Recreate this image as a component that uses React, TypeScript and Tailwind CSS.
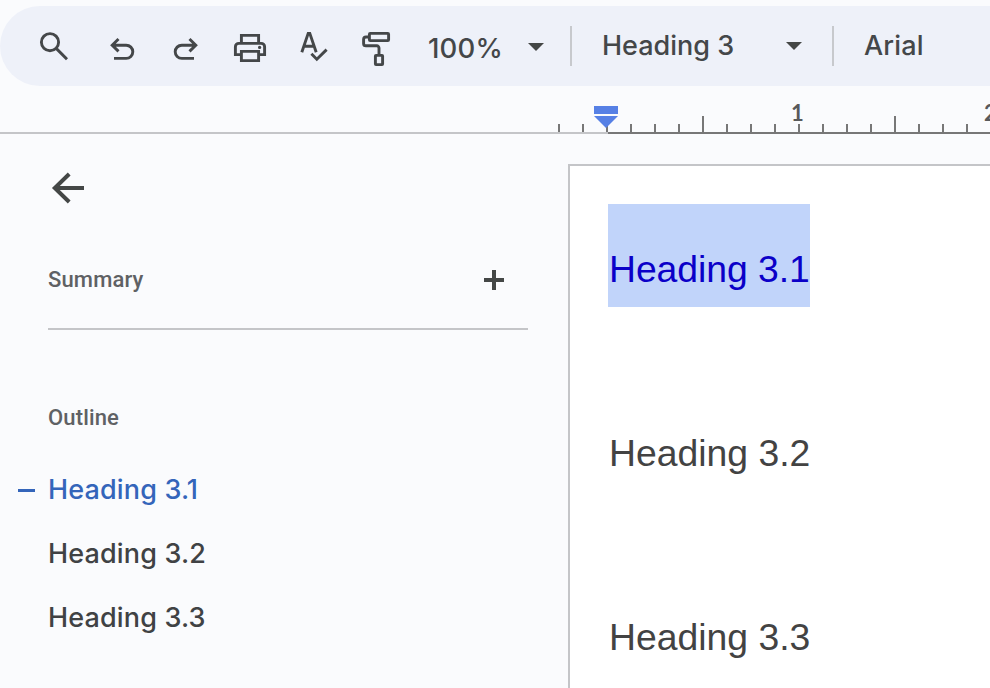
import React from "react";

const outline = ["Heading 3.1", "Heading 3.2", "Heading 3.3"];
const ticks = Array.from({ length: 18 }, (_, i) => 558 + i * 24);

const Caret: React.FC = () => (
  <svg width="16" height="8" viewBox="0 0 16 8" className="block shrink-0">
    <path d="M0 0H16L8 8Z" fill="#444746" />
  </svg>
);

const ToolbarIcons: React.FC = () => (
  <div className="flex h-10 shrink-0 items-center pl-9 text-[#444749]">
    <svg width="36" height="40" viewBox="36 26 36 40" fill="none" stroke="currentColor" strokeWidth="2.9">
      <circle cx="50" cy="42.2" r="8.6" />
      <path d="M56.2 48.4L67 59.2" />
    </svg>
    <svg width="32" height="40" viewBox="106 26 32 40" fill="none" stroke="currentColor" strokeWidth="2.9" className="ml-[34px]">
      <path d="M118.5 39L112.2 45.2L118.5 51.4M112.2 45.2H126.2A6.6 6.6 0 0 1 126.2 58.4H114" />
    </svg>
    <svg width="32" height="40" viewBox="170 26 32 40" fill="none" stroke="currentColor" strokeWidth="2.9" className="ml-8">
      <path d="M189.5 39L195.8 45.2L189.5 51.4M195.8 45.2H181.8A6.6 6.6 0 0 0 181.8 58.4H194" />
    </svg>
    <svg width="36" height="40" viewBox="232 26 36 40" fill="none" stroke="currentColor" strokeWidth="2.9" className="ml-[30px]">
      <path d="M241.4 43.4V35.4H258.6V43.4M241.4 54.6H235.4V46.8A3.4 3.4 0 0 1 238.8 43.4H261.2A3.4 3.4 0 0 1 264.6 46.8V54.6H258.6M241.4 51.4H258.6V60.6H241.4Z" />
      <circle cx="259.6" cy="47.4" r="1.6" fill="currentColor" stroke="none" />
    </svg>
    <svg width="32" height="40" viewBox="298 26 32 40" fill="none" stroke="currentColor" strokeWidth="2.9" className="ml-[30px]">
      <path d="M301.8 52.2L308.2 33.4H309.8L316.2 52.2M304 46.2H314M311.4 53.8L316.8 59.2L326.6 49.6" />
    </svg>
    <svg width="34" height="42" viewBox="360 25 34 42" fill="none" stroke="currentColor" strokeWidth="2.9" className="ml-[30px]">
      <rect x="369.4" y="33.4" width="19.2" height="7.2" rx="0.8" />
      <path d="M368.5 37H366A2.4 2.4 0 0 0 363.6 39.4V43.4A2.4 2.4 0 0 0 366 45.8H376.8A2.2 2.2 0 0 1 379 48V54" />
      <rect x="375.4" y="55.4" width="7.2" height="9.2" rx="0.6" />
    </svg>
  </div>
);

const Toolbar: React.FC = () => (
  <div className="mt-1.5 flex h-20 w-full shrink-0 items-center rounded-l-full bg-[#eef1f9] text-[27px] leading-8 font-medium whitespace-nowrap text-[#444749]">
    <ToolbarIcons />
    <div className="ml-[34px] flex w-[108px] items-center">
      <span className="mt-1 text-[27.5px] tracking-[0.2px]">100%</span>
    </div>
    <div className="mt-0.5 -ml-2 flex">
      <Caret />
    </div>
    <div className="ml-[26px] h-10 w-0.5 bg-[#c7c9cd]" />
    <span className="ml-[30px] w-[184px]">Heading 3</span>
    <Caret />
    <div className="ml-[30px] h-10 w-0.5 bg-[#c7c9cd]" />
    <span className="ml-[30px] tracking-[0.2px]">Arial</span>
  </div>
);

const Ruler: React.FC = () => (
  <svg width="990" height="48" viewBox="0 86 990 48" className="block shrink-0">
    <rect x="0" y="132" width="608" height="2" fill="#c4c5c8" />
    <rect x="608" y="132" width="382" height="2" fill="#777777" />
    {ticks.map((x, i) => (
      <rect key={x} x={x} y={i % 8 === 6 ? 116 : 124} width="2" height={i % 8 === 6 ? 16 : 8} fill="#777777" />
    ))}
    <rect x="594" y="106" width="24" height="8" fill="#5680e5" />
    <path d="M594 116H618L606 128Z" fill="#5680e5" />
    <g fill="#58595b" fontFamily="Lato, sans-serif" fontSize="22" fontWeight="700">
      <text x="791" y="120.5">1</text>
      <text x="984" y="120.5">2</text>
    </g>
  </svg>
);

const Sidebar: React.FC = () => (
  <aside className="flex w-[568px] shrink-0 flex-col pl-12 font-['Roboto',sans-serif]">
    <svg width="40" height="36" viewBox="48 170 40 36" fill="none" stroke="#444746" strokeWidth="4" className="mt-9 block">
      <path d="M84 188H55M69.2 174L54.8 188L69.2 202" />
    </svg>
    <div className="mt-14 flex h-9 w-[480px] items-center justify-between pr-6">
      <span className="-mt-0.5 text-[22px] font-medium tracking-[0.15px] text-[#5f6164]">Summary</span>
      <svg width="20" height="20" viewBox="0 0 20 20">
        <path d="M8 0H12V8H20V12H12V20H8V12H0V8H8Z" fill="#444746" />
      </svg>
    </div>
    <div className="mt-[30px] h-0.5 w-[480px] bg-[#c4c5c8]" />
    <div className="mt-[70px] h-9 text-[22px] leading-9 font-medium tracking-[0.15px] text-[#5f6164]">Outline</div>
    <nav className="mt-[22px] font-['Inter',sans-serif] text-[27px] leading-[64px] font-[550] tracking-[0.15px]">
      {outline.map((item, i) => (
        <div key={item} className={i === 0 ? "-ml-[30px] flex h-16 items-center text-[#3465ba]" : "h-16 text-[#404244]"}>
          {i === 0 && <span className="mr-[13px] h-[3px] w-[17px] bg-[#3465ba]" />}
          {item}
        </div>
      ))}
    </nav>
  </aside>
);

const Page: React.FC = () => (
  <main className="mt-[30px] flex-1 border-t-2 border-l-2 border-[#c4c5c8] bg-white pt-[38px] pl-[38px] font-['Liberation_Sans',sans-serif] text-[37.33px] leading-[43px] whitespace-nowrap text-[#434343]">
    {outline.map((item, i) => (
      <h3 key={item} className="h-[184px]">
        <span className={i === 0 ? "inline-block h-[103px] w-[202px] bg-[#c1d4fa] pt-11 pl-px tracking-[-0.05px] text-[#0b00c8]" : "inline-block pt-11 pl-px"}>
          {item}
        </span>
      </h3>
    ))}
  </main>
);

export default function App() {
  return (
    <div className="flex h-[688px] w-[990px] flex-col overflow-hidden bg-[#fafbfd] font-['Inter',sans-serif]">
      <Toolbar />
      <Ruler />
      <div className="flex min-h-0 flex-1">
        <Sidebar />
        <Page />
      </div>
    </div>
  );
}
